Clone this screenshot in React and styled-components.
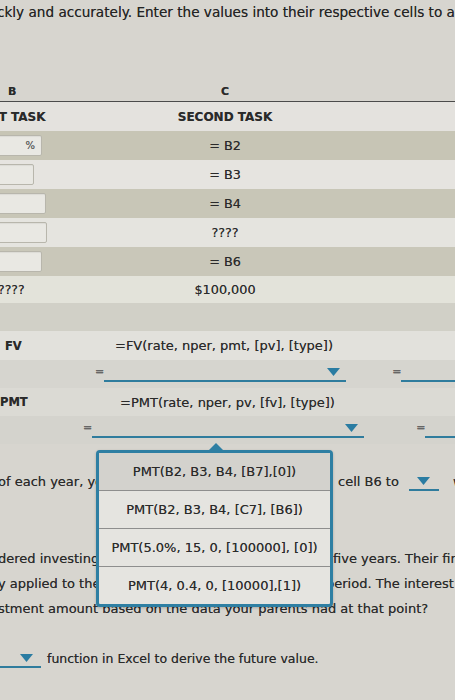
import React from "react";
import styled, { createGlobalStyle } from "styled-components";

const GlobalStyle = createGlobalStyle`
  html, body {
    margin: 0;
    padding: 0;
  }
  body {
    background: #d7d5cf;
    font-family: "DejaVu Sans", Verdana, sans-serif;
    color: #2a2a2a;
  }
`;

const Page = styled.div`
  position: relative;
  width: 455px;
  height: 700px;
  overflow: hidden;
  font-size: 12px;
  text-shadow: 0 0 0.4px rgba(30, 30, 30, 0.6);
`;

const Intro = styled.p`
  margin: 0 0 0 -3px;
  height: 82px;
  line-height: 24px;
  white-space: nowrap;
  font-size: 13.6px;
  color: #242424;
`;

const Row = styled.div`
  display: grid;
  grid-template-columns: 112px 226px 1fr;
  align-items: center;
  height: ${(p) => p.h || 29}px;
  background: ${(p) => p.bg || "transparent"};
  border-bottom: ${(p) => (p.rule ? "1.5px solid #4b4b4b" : "none")};
  box-sizing: border-box;
  white-space: nowrap;
`;

const Left = styled.div`
  padding-left: ${(p) => p.pad || 0}px;
  font-weight: ${(p) => (p.bold ? 700 : 400)};
  font-size: ${(p) => p.size || 12.5}px;
  overflow: hidden;
`;

const Center = styled.div`
  text-align: center;
  font-weight: ${(p) => (p.bold ? 700 : 400)};
  font-size: ${(p) => p.size || 12.8}px;
`;

const Formula = styled.div`
  padding-left: ${(p) => p.pad || 3}px;
  font-size: 13px;
  grid-column: 2 / 4;
`;

const Field = styled.div`
  width: ${(p) => p.w}px;
  height: 21px;
  margin-left: -2px;
  box-sizing: border-box;
  border: 1px solid #b8b6ac;
  border-radius: 2px;
  background: #e9e8e3;
  box-shadow: inset 0 1px 1px rgba(0, 0, 0, 0.06);
  display: flex;
  align-items: center;
  justify-content: flex-end;
  padding-right: 6px;
  font-size: 10px;
  color: #666;
`;

const AnswerRow = styled.div`
  display: flex;
  align-items: flex-end;
  height: 28px;
  padding-left: ${(p) => p.pad}px;
  padding-bottom: 6px;
  box-sizing: border-box;
  background: ${(p) => p.bg || "transparent"};
`;

const Eq = styled.span`
  width: 12px;
  font-size: 11px;
  font-weight: 700;
  color: #666;
  line-height: 20px;
  margin-left: ${(p) => p.gap || 0}px;
`;

const Drop = styled.span`
  display: inline-flex;
  align-items: center;
  justify-content: ${(p) => (p.mid ? "center" : "flex-end")};
  width: ${(p) => p.w}px;
  height: 18px;
  padding-right: ${(p) => p.r || 0}px;
  box-sizing: border-box;
  border-bottom: 2px solid #2f7c9d;
  flex-shrink: 0;
`;

const Caret = () => (
  <svg width="13" height="8" viewBox="0 0 13 8">
    <path d="M0 0 H13 L6.5 8 Z" fill="#2a7ca2" />
  </svg>
);

const Popup = styled.div`
  position: absolute;
  left: 96px;
  top: 450px;
  width: 237px;
  box-sizing: border-box;
  border: 3px solid #2e7fa3;
  border-radius: 4px;
  background: #e5e4e0;
  box-shadow: 0 1px 3px rgba(0, 0, 0, 0.2);
  &::before {
    content: "";
    position: absolute;
    top: -10px;
    left: 110px;
    border-left: 7px solid transparent;
    border-right: 7px solid transparent;
    border-bottom: 7px solid #2e7fa3;
  }
`;

const Option = styled.div`
  height: 37px;
  display: flex;
  align-items: center;
  justify-content: center;
  font-size: 13px;
  color: #2a2a2a;
  white-space: nowrap;
  background: ${(p) => (p.active ? "#d3d2cd" : "transparent")};
  & + & {
    border-top: 1px solid #8e8e8e;
  }
`;

const Text = styled.div`
  padding-top: ${(p) => p.top || 0}px;
`;

const Line = styled.div`
  display: grid;
  grid-template-columns: ${(p) => (p.split ? `${p.split}px 1fr` : "1fr")};
  align-items: center;
  height: 25px;
  margin-top: ${(p) => p.mt || 0}px;
  white-space: nowrap;
  overflow: hidden;
  font-size: ${(p) => p.size || 13}px;
  color: #2a2a2a;
`;

const Clip = styled.span`
  overflow: hidden;
  margin-left: -2px;
`;

const Tail = styled.span`
  display: flex;
  align-items: center;
  gap: ${(p) => p.gap || 0}px;
`;

const rows = [
  { bg: "#c7c5b5", field: 44, unit: "%", value: "= B2" },
  { bg: "#e6e4e0", field: 36, value: "= B3" },
  { bg: "#c8c6b7", field: 48, value: "= B4" },
  { bg: "#e5e4df", field: 49, value: "????" },
  { bg: "#c9c7b9", field: 44, value: "= B6" },
];

const options = [
  "PMT(B2, B3, B4, [B7],[0])",
  "PMT(B2, B3, B4, [C7], [B6])",
  "PMT(5.0%, 15, 0, [100000], [0])",
  "PMT(4, 0.4, 0, [10000],[1])",
];

export default function App() {
  return (
    <Page>
      <GlobalStyle />
      <Intro>
        ckly and accurately. Enter the values into their respective cells to
        answer
      </Intro>

      <Row h={20} rule>
        <Left pad={8} bold size={11}>
          B
        </Left>
        <Center bold size={11}>
          C
        </Center>
      </Row>
      <Row bg="#e4e2de">
        <Left bold size={12}>
          <span style={{ marginLeft: -10 }}>ST TASK</span>
        </Left>
        <Center bold size={12}>
          SECOND TASK
        </Center>
      </Row>
      {rows.map((r) => (
        <Row key={r.value + r.field} bg={r.bg}>
          <Left>
            <Field w={r.field}>{r.unit}</Field>
          </Left>
          <Center>{r.value}</Center>
        </Row>
      ))}
      <Row bg="#e3e3da" h={27}>
        <Left>
          <Clip>????</Clip>
        </Left>
        <Center>$100,000</Center>
      </Row>
      <Row bg="#d1d0c7" h={28} />

      <Row bg="#e2e1dc">
        <Left pad={5} bold size={11.5}>
          FV
        </Left>
        <Formula>=FV(rate, nper, pmt, [pv], [type])</Formula>
      </Row>
      <AnswerRow pad={95} bg="#d6d5cf">
        <Eq>=</Eq>
        <Drop w={242} r={6}>
          <Caret />
        </Drop>
        <Eq gap={46}>=</Eq>
        <Drop w={60} />
      </AnswerRow>
      <Row bg="#dbdad4" h={28}>
        <Left bold size={11.5}>
          PMT
        </Left>
        <Formula pad={8}>=PMT(rate, nper, pv, [fv], [type])</Formula>
      </Row>
      <AnswerRow pad={83} bg="#d4d3cd">
        <Eq>=</Eq>
        <Drop w={272} r={6}>
          <Caret />
        </Drop>
        <Eq gap={52}>=</Eq>
        <Drop w={40} />
      </AnswerRow>

      <Text top={25}>
        <Line split={338}>
          <Clip>of each year, you want to use the PMT function in</Clip>
          <Tail gap={10}>
            cell B6 to
            <Drop w={30} mid>
              <Caret />
            </Drop>
            <span style={{ marginLeft: 4 }}>w</span>
          </Tail>
        </Line>
        <Line split={333} mt={52}>
          <Clip>dered investing a lump sum for a period of</Clip>
          <Tail>five years. Their fin</Tail>
        </Line>
        <Line split={326}>
          <Clip>y applied to the investment over the same</Clip>
          <Tail>period. The interest</Tail>
        </Line>
        <Line>
          <Clip>stment amount based on the data your parents had at that point?</Clip>
        </Line>
        <Line mt={25} size={12.5}>
          <Tail gap={6}>
            <Drop w={41} r={8}>
              <Caret />
            </Drop>
            function in Excel to derive the future value.
          </Tail>
        </Line>
      </Text>

      <Popup>
        {options.map((o, i) => (
          <Option key={o} active={i === 0}>
            {o}
          </Option>
        ))}
      </Popup>
    </Page>
  );
}
